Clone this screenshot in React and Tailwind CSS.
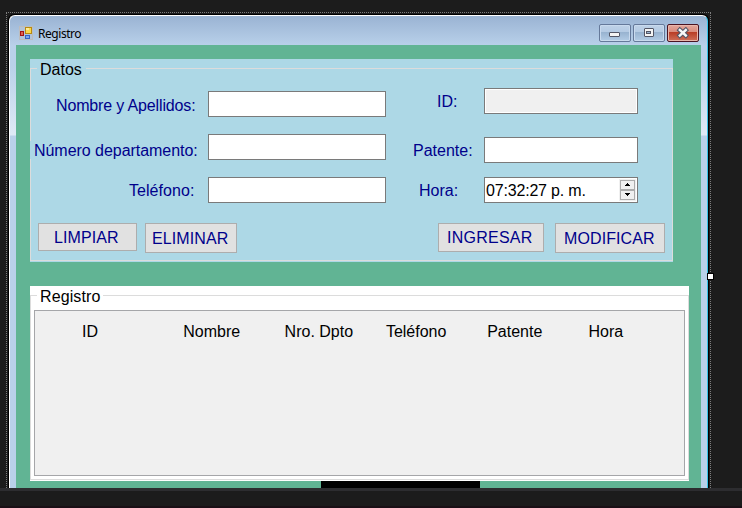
const ARIAL = "font-['Liberation_Sans',Arial,sans-serif] text-[16px] leading-[20px] whitespace-nowrap";

function Label({ className, children }) {
  return <div className={`${ARIAL} h-[18px] text-[#00008b] ${className}`}>{children}</div>;
}

function Field({ className }) {
  return <div className={`h-[26px] border border-[#7a7a7a] ${className}`} />;
}

function Button({ className, children }) {
  return (
    <button className={`${ARIAL} flex shrink-0 justify-start border border-[#adadad] bg-[#e1e1e1] text-[#00008b] ${className}`}>
      {children}
    </button>
  );
}

function FormIcon() {
  return (
    <svg width="14" height="14" viewBox="0 0 14 14" className="shrink-0" shapeRendering="crispEdges">
      <rect x="0.5" y="0.5" width="13" height="13" fill="#b4c4d8" stroke="#bdbdbd" />
      <rect x="6" y="1" width="7" height="7" fill="#b88a10" />
      <rect x="7" y="2" width="5" height="5" fill="#fbd84a" />
      <rect x="7" y="2" width="3" height="2" fill="#fdeb9a" />
      <rect x="1" y="5" width="4" height="5" fill="#a31515" />
      <rect x="2" y="6" width="2" height="3" fill="#e0604c" />
      <rect x="6" y="9" width="5" height="4" fill="#3565c4" />
      <rect x="7" y="10" width="3" height="2" fill="#7ea6ee" />
    </svg>
  );
}

function Caption({ close, children }) {
  const tone = close
    ? "border-[#4b1422] bg-[linear-gradient(#e3a79c_0%,#d98a7b_45%,#b93d26_46%,#cf7059_100%)] shadow-[inset_0_0_0_1px_#e9b6ab]"
    : "border-[#65799a] bg-[linear-gradient(#bfd2e8_0%,#b4cae3_45%,#98b3d0_46%,#b3cce6_100%)] shadow-[inset_0_0_0_1px_#c9daee]";
  return (
    <div className={`h-[18px] w-8 rounded-[2px] border ${tone}`}>
      <svg width="30" height="16" viewBox="0 0 30 16">{children}</svg>
    </div>
  );
}

function TitleBar() {
  return (
    <div className="flex h-[29px] pl-[9px] pr-[8px]">
      <div className="pt-[10px]"><FormIcon /></div>
      <div className="ml-[5px] mt-[10px] h-4 font-['Noto_Sans','Open_Sans',sans-serif] text-[12px] leading-4 tracking-[-0.45px] text-black">
        Registro
      </div>
      <div className="ml-auto mt-2 flex gap-[2px]">
        <Caption>
          <rect x="9.5" y="7.5" width="10" height="4" rx="0.5" fill="#f4f4f4" stroke="#535666" />
        </Caption>
        <Caption>
          <rect x="10.5" y="3.5" width="9" height="8" rx="0.5" fill="#f4f4f4" stroke="#535666" />
          <rect x="12.5" y="6.5" width="4" height="2" fill="#98b3d0" stroke="#535666" />
        </Caption>
        <Caption close>
          <path d="M11.8 5L17.8 10.5M17.8 5L11.8 10.5" stroke="#535666" strokeWidth="4.6" strokeLinecap="square" />
          <path d="M11.8 5L17.8 10.5M17.8 5L11.8 10.5" stroke="#f7f7f7" strokeWidth="2.4" strokeLinecap="square" />
        </Caption>
      </div>
    </div>
  );
}

function TimePicker() {
  return (
    <div className="mt-[14px] flex h-[26px] justify-between border border-[#7a7a7a] bg-white">
      <span className={`${ARIAL} ml-px mt-[3px] tracking-[-0.18px] text-black`}>07:32:27 p. m.</span>
      <div className="mr-px mt-px flex h-[22px] w-[17px] flex-col bg-[#f0f0f0] p-px">
        <svg width="15" height="20" viewBox="0 0 15 20" shapeRendering="crispEdges">
          <rect x="0.5" y="0.5" width="14" height="9" fill="#f0f0f0" stroke="#acacac" />
          <rect x="0.5" y="10.5" width="14" height="9" fill="#f0f0f0" stroke="#acacac" />
          <path d="M7 3h1v1h1v1h1v1h-5v-1h1v-1h1z" fill="#000" />
          <path d="M5 13h5v1h-1v1h-1v1h-1v-1h-1v-1h-1z" fill="#000" />
        </svg>
      </div>
    </div>
  );
}

function DataGroup() {
  return (
    <div className="h-[203px] w-[643px] bg-[#add8e6] pt-[9px] pb-px">
      <div className="h-[193px] border border-[#dcdcdc]">
        <div className={`${ARIAL} ml-[6px] -mt-[9px] h-[18px] w-[49px] bg-[#add8e6] pl-[3px] text-black`}>Datos</div>
        <div className="flex h-[145px]">
          <div className="w-[177px] pt-[18px]">
            <Label className="pl-[25px] tracking-[-0.15px]">Nombre y Apellidos:</Label>
            <Label className="mt-[27px] w-[170px] -ml-px bg-[#add8e6] pl-[4px] tracking-[-0.04px]">Número departamento:</Label>
            <Label className="mt-[22px] pl-[98px] tracking-[0.05px]">Teléfono:</Label>
          </div>
          <div className="w-[178px] pt-[13px]">
            <Field className="bg-white" />
            <Field className="mt-[17px] bg-white" />
            <Field className="mt-[17px] bg-white" />
          </div>
          <div className="w-[98px] pt-[14px]">
            <Label className="pl-[51px]">ID:</Label>
            <Label className="mt-[31px] pl-[27px]">Patente:</Label>
            <Label className="mt-[22px] pl-[33px]">Hora:</Label>
          </div>
          <div className="w-[154px] pt-[10px]">
            <Field className="bg-[#f0f0f0] shadow-[inset_0_0_0_1px_#fff]" />
            <Field className="mt-[23px] bg-white" />
            <TimePicker />
          </div>
        </div>
        <div className="flex items-start pl-[7px]">
          <Button className="h-[28px] w-[99px] pl-[15px] pt-[4px] tracking-[0.1px]">LIMPIAR</Button>
          <Button className="ml-2 h-[30px] w-[92px] pl-[6px] pt-[5px] tracking-[0.1px]">ELIMINAR</Button>
          <Button className="ml-[201px] h-[29px] w-[106px] pl-[8px] pt-[4px] tracking-[0.25px]">INGRESAR</Button>
          <Button className="ml-[11px] h-[30px] w-[110px] pl-[8px] pt-[5px] tracking-[0.1px]">MODIFICAR</Button>
        </div>
      </div>
    </div>
  );
}

const COLUMNS = ["ID", "Nombre", "Nro. Dpto", "Teléfono", "Patente", "Hora"];

function RecordGroup() {
  return (
    <div className="mt-[24px] h-[195px] w-[659px] bg-white pt-[9px] pb-px">
      <div className="h-[185px] border border-[#dcdcdc]">
        <div className={`${ARIAL} ml-[6px] -mt-[9px] h-[18px] w-[66px] bg-white pl-[3px] tracking-[0.1px] text-black`}>Registro</div>
        <div className="ml-[3px] mt-[5px] h-[166px] w-[651px] border border-[#a5a6a9] bg-[#f0f0f0] pl-[47px] pt-[11px]">
          <div className="grid grid-cols-[repeat(6,101.3px)]">
            {COLUMNS.map((name) => (
              <div key={name} className={`${ARIAL} text-black`}>{name}</div>
            ))}
          </div>
        </div>
      </div>
    </div>
  );
}

export default function App() {
  return (
    <div className="flex h-[508px] w-[742px] flex-col overflow-hidden bg-[#1c1c1c]">
      <div className="h-[488px] overflow-hidden pl-[6px] pt-[12px]">
        <div className="relative h-[500px] w-[705px] border border-dotted border-[#7d7d7d] bg-[#1c1c1c] p-px">
          <div className="h-[500px] w-[701px] rounded-t-[6px] border-x border-t border-black">
            <div className="h-[498px] w-[699px] rounded-t-[6px] border-l border-r border-t border-l-white border-r-[#35c3e8] border-t-white bg-[linear-gradient(#9ab3d3_0px,#b9d1ea_30px,#b9d1ea_50px,#dfeaf6_119px,#b9d1ea_120px)]">
              <TitleBar />
              <div className="ml-[6px] h-[460px] w-[685px] bg-[#61b494] pl-[14px] pt-[14px]">
                <DataGroup />
                <RecordGroup />
                <div className="ml-[291px] h-[10px] w-[159px] bg-black" />
              </div>
            </div>
          </div>
          <div className="absolute left-[700px] top-[260px] h-[7px] w-[7px] border border-black bg-white" />
        </div>
      </div>
      <div className="h-[3px] bg-[#2d2d30]" />
      <div className="h-[15px] bg-[#1c1c1c]" />
      <div className="h-[2px] bg-[#1a1016]" />
    </div>
  );
}
